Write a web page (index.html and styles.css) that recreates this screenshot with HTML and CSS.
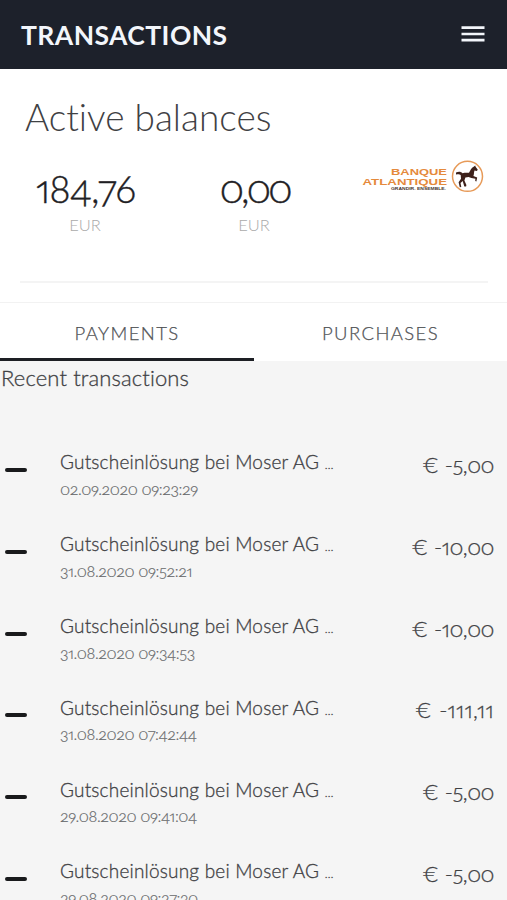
FILE: index.html
```html
<!DOCTYPE html>
<html lang="en">
<head>
<meta charset="utf-8">
<title>Transactions</title>
<link rel="stylesheet" href="styles.css">
</head>
<body>
<header class="bar">
  <h1 class="bar-title">TRANSACTIONS</h1>
  <svg class="menu" viewBox="0 0 24 16" width="24" height="16" aria-label="Menu"><path d="M.5 1.7h23M.5 8h23M.5 14.2h23" stroke="#f3f6fb" stroke-width="2.7"/></svg>
</header>
<section class="balances">
  <h2 class="balances-title">Active balances</h2>
  <div class="balance-row">
    <div class="balance"><div class="value long">184,76</div><div class="currency">EUR</div></div>
    <div class="balance"><div class="value short">0,00</div><div class="currency">EUR</div></div>
    <div class="brand">
      <svg viewBox="0 0 122 34" width="122" height="34">
        <g font-family="Liberation Sans, sans-serif" font-weight="bold" fill="#e58a3c">
          <text x="29" y="14.8" font-size="9.8" textLength="56" lengthAdjust="spacingAndGlyphs">BANQUE</text>
          <text x="0.5" y="24.6" font-size="9.8" textLength="84.500" lengthAdjust="spacingAndGlyphs">ATLANTIQUE</text>
          <text x="29" y="30" font-size="4.3" fill="#49352e" textLength="55" lengthAdjust="spacingAndGlyphs">GRANDIR. ENSEMBLE.</text>
        </g>
        <circle cx="105.500" cy="16.300" r="15" fill="#fff" stroke="#e79a58" stroke-width="1.500"/>
        <path fill="#3d211b" d="M94 12.500c3-1.200 5-.8 6.500.8 3-.8 4.500-.3 6.500-.5 1.500-2.500 2-5 5-6.300l1.200-1 .4 1.300 2.200 3-1 1.300-2.300-.5c-.8 2-.3 4-1.100 5.500l3.800 1.400-.8 4-1.200-.4.200-2.300-4-.7-2.800-1-3.200.5-1 3 2 4.500-.3 1.400h-1.800l-1.600-5.500-2.200 2 .8 4-1.500.2-1.200-5 2.400-3.400-.3-3.800c-1.500-.9-2.200-.6-4.700-.5z"/>
      </svg>
    </div>
  </div>
</section>
<nav class="tabs">
  <div class="tab active">PAYMENTS</div>
  <div class="tab purchases">PURCHASES</div>
</nav>
<main class="recent">
  <h3 class="recent-title">Recent transactions</h3>
  <div class="list">
    <div class="item"><span class="minus"></span><div class="info"><div class="name">Gutscheinlösung bei Moser AG <span class="dots">…</span></div><div class="date">02.09.2020 09:23:29</div></div><div class="amount"><span class="euro">€</span> -5,00</div></div>
    <div class="item"><span class="minus"></span><div class="info"><div class="name">Gutscheinlösung bei Moser AG <span class="dots">…</span></div><div class="date">31.08.2020 09:52:21</div></div><div class="amount"><span class="euro">€</span> -10,00</div></div>
    <div class="item"><span class="minus"></span><div class="info"><div class="name">Gutscheinlösung bei Moser AG <span class="dots">…</span></div><div class="date">31.08.2020 09:34:53</div></div><div class="amount"><span class="euro">€</span> -10,00</div></div>
    <div class="item"><span class="minus"></span><div class="info"><div class="name">Gutscheinlösung bei Moser AG <span class="dots">…</span></div><div class="date">31.08.2020 07:42:44</div></div><div class="amount ones"><span class="euro">€</span> -111,11</div></div>
    <div class="item"><span class="minus"></span><div class="info"><div class="name">Gutscheinlösung bei Moser AG <span class="dots">…</span></div><div class="date">29.08.2020 09:41:04</div></div><div class="amount"><span class="euro">€</span> -5,00</div></div>
    <div class="item"><span class="minus"></span><div class="info"><div class="name">Gutscheinlösung bei Moser AG <span class="dots">…</span></div><div class="date">29.08.2020 09:27:30</div></div><div class="amount"><span class="euro">€</span> -5,00</div></div>
  </div>
</main>
</body>
</html>
```
FILE: styles.css
```css
* { box-sizing: border-box; margin: 0; }
html, body { height: 900px; overflow: hidden; }
body {
  display: flex;
  flex-direction: column;
  background: #fff;
  color: #3f4144;
  font-family: Lato, "Open Sans", sans-serif;
  font-feature-settings: "onum", "pnum";
  font-variant-ligatures: none;
  white-space: nowrap;
}
h1, h2, h3 { font-weight: 400; }
.bar {
  flex: none;
  display: flex;
  align-items: center;
  justify-content: space-between;
  height: 69px;
  padding: 0 22px 0 21px;
  background: #1d212b;
}
.bar-title { font-size: 26.500px; line-height: 30px; font-weight: 700; letter-spacing: .43px; color: #f3f6fb; padding-top: 1px; }
.menu { display: block; margin-bottom: 1px; }
.balances {
  flex: none;
  height: 214px;
  margin: 0 19px 0 20px;
  border-bottom: 2px solid #f4f4f4;
}
.balances-title { margin: 26px 0 0 5px; font-size: 37px; line-height: 44px; font-weight: 300; letter-spacing: 0; }
.balance-row { display: grid; grid-template-columns: 131px 207px 130px; margin-top: 27px; }
.balance { text-align: center; }
.value { font-size: 39px; line-height: 44px; font-weight: 300; color: #1e2023; -webkit-text-stroke: .4px #1e2023; }
.long { letter-spacing: -1px; }
.short { letter-spacing: -3.1px; }
.currency { font-size: 16.500px; line-height: 20px; font-weight: 300; color: #aaa; margin: 5px 1px 0 0; }
.brand { padding-left: 4px; margin-top: -6px; }
.tabs {
  flex: none;
  display: grid;
  grid-template-columns: 254px 253px;
  grid-template-rows: 58px;
  height: 59px;
  margin-top: 19px;
  border-top: 1px solid #f2f2f2;
}
.tab { text-align: center; font-size: 18.500px; line-height: 60px; font-weight: 300; letter-spacing: 1.4px; color: #505356; -webkit-text-stroke: .25px #505356; }
.active { height: 58px; border-bottom: 3px solid #1d1f24; }
.recent { flex: 1; background: #f5f5f5; overflow: hidden; }
.recent-title { padding-left: 1px; font-size: 22px; line-height: 34px; font-weight: 300; letter-spacing: .13px; -webkit-text-stroke: .3px #3f4144; }
.list { margin-top: 49px; }
.item { display: flex; height: 81.8px; padding: 0 13px 0 5px; }
.minus { width: 22px; height: 4px; border-radius: 2px; background: #191a1c; margin-top: 24px; }
.info { flex: 1; padding-left: 33px; }
.name { font-size: 19px; line-height: 24px; margin-top: 6.4px; font-weight: 300; letter-spacing: .2px; -webkit-text-stroke: .3px #3f4144; }
.dots { font-size: 12px; }
.date { font-size: 16px; line-height: 20px; font-weight: 300; letter-spacing: -.4px; color: #66686a; margin-top: 1.6px; -webkit-text-stroke: .2px #66686a; }
.amount { font-size: 22px; line-height: 26px; margin-top: 8px; font-weight: 300; letter-spacing: -.5px; -webkit-text-stroke: .3px #3f4144; }
.ones { letter-spacing: .3px; }
.euro { font-feature-settings: "lnum"; margin-right: 1px; }
```
